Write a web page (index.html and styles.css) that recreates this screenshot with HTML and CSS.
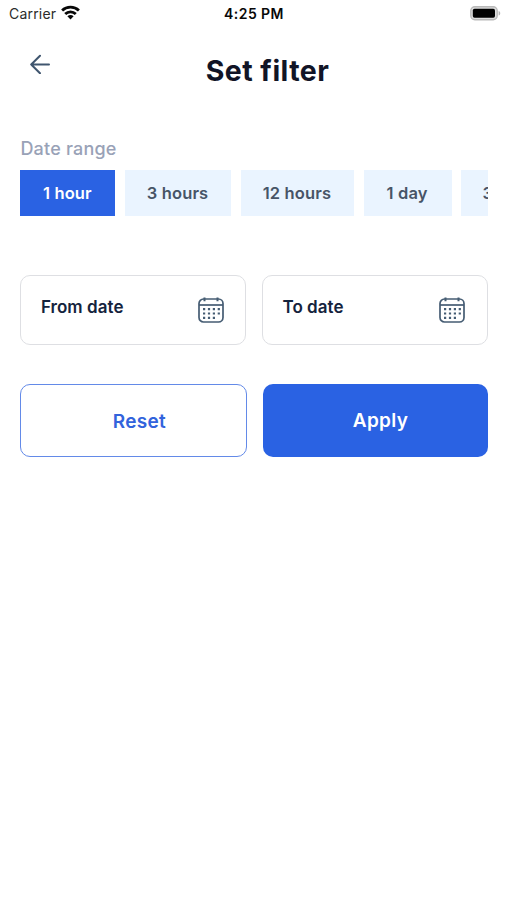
FILE: index.html
```html
<!DOCTYPE html>
<html lang="en">
<head>
<meta charset="utf-8">
<meta name="viewport" content="width=device-width, initial-scale=1">
<title>Set filter</title>
<link rel="stylesheet" href="styles.css">
</head>
<body>
<div class="status">
  <div class="carrier"><span>Carrier</span>
    <svg width="19" height="15" viewBox="0 0 19 15" fill="none" stroke="#080808" stroke-width="2.8"><path d="M1.1 5.4C5.8.9 13.2.9 17.9 5.4M4.2 9c3-2.9 7.6-2.9 10.6 0"/><path d="M9.5 14.4 6.4 11.3c1.7-1.6 4.5-1.6 6.2 0Z" fill="#080808" stroke="none"/></svg>
  </div>
  <div class="time">4:25 PM</div>
  <svg class="battery" width="31" height="15" viewBox="0 0 31 15"><rect x=".8" y=".8" width="26.4" height="13" rx="4" fill="#ddd" stroke="#b9b9b9" stroke-width="1.4"/><rect x="2.8" y="2.8" width="22.2" height="9" rx="1.7" fill="#000"/><path d="M28.6 5c2.2.6 2.2 4 0 4.6Z" fill="#b5b5b5"/></svg>
</div>
<header class="header">
  <button class="back" aria-label="Back"><svg width="20" height="20" viewBox="0 0 20 20" fill="none" stroke="#40566f" stroke-width="2" stroke-linecap="round" stroke-linejoin="round"><path d="M19 10.5H1.2M10 1.7 1.2 10.5l8.8 8.8"/></svg></button>
  <h1>Set filter</h1>
</header>
<main>
  <div class="label"><span>Date range</span></div>
  <div class="chips">
    <button class="chip c1 active"><span>1 hour</span></button>
    <button class="chip c2"><span>3 hours</span></button>
    <button class="chip c3"><span>12 hours</span></button>
    <button class="chip c4"><span>1 day</span></button>
    <button class="chip c5"><span>3 days</span></button>
  </div>
  <div class="dates">
    <div class="field"><span>From date</span>
      <svg width="26" height="26" viewBox="0 0 26 26" fill="none" stroke="#455c73" stroke-width="1.7"><rect x="1" y="2" width="24" height="23" rx="4.5"/><path d="M1 8h24"/><path d="M6.5.5v3.8M19.5.5v3.8" stroke-width="2"/><path d="M5 12.2h17M5 16.5h17M5 20.8h12" stroke-width="2.2" stroke-dasharray="2.2 2.7"/></svg>
    </div>
    <div class="field"><span>To date</span>
      <svg width="26" height="26" viewBox="0 0 26 26" fill="none" stroke="#455c73" stroke-width="1.7"><rect x="1" y="2" width="24" height="23" rx="4.5"/><path d="M1 8h24"/><path d="M6.5.5v3.8M19.5.5v3.8" stroke-width="2"/><path d="M5 12.2h17M5 16.5h17M5 20.8h12" stroke-width="2.2" stroke-dasharray="2.2 2.7"/></svg>
    </div>
  </div>
  <div class="actions">
    <button class="reset"><span>Reset</span></button>
    <button class="apply"><span>Apply</span></button>
  </div>
</main>
</body>
</html>
```
FILE: styles.css
```css
* { box-sizing: border-box; }
body { margin: 0; min-height: 900px; background: #fff; font-family: Inter, "Liberation Sans", sans-serif; overflow-x: hidden; }
button { margin: 0; padding: 0; border: 0; background: none; font-family: inherit; }
svg { display: block; flex: none; }
.status { display: grid; grid-template-columns: 1fr auto 1fr; align-items: start; height: 28px; padding: 5px 6px 0 9px; color: #080808; }
.carrier { display: flex; gap: 5px; font-size: 14px; line-height: 18px; letter-spacing: .2px; color: #2c2c2c; }
.time { margin-left: -2px; font-size: 14px; line-height: 18px; font-weight: 600; letter-spacing: .45px; }
.battery { justify-self: end; margin-top: 1px; }
.header { display: grid; grid-template-columns: 60px 1fr 32px; align-items: start; height: 110px; padding: 26px 0 0; }
.back { width: 20px; height: 20px; margin-left: 30px; }
.header h1 { margin: 0; text-align: center; font-size: 28.5px; line-height: 34px; font-weight: 650; letter-spacing: .45px; color: #111426; white-space: nowrap; }
main { padding: 0 19.5px 0 20.4px; }
.label { height: 31.6px; padding-top: 1px; line-height: 20px; font-size: 18px; color: #99a2b7; letter-spacing: .2px; font-weight: 450; }
.chips { display: flex; gap: 9.4px; overflow: hidden; height: 46.4px; }
.chip { flex: none; background: #eaf4ff; color: #475467; font-size: 16.5px; line-height: 46px; font-weight: 600; letter-spacing: .15px; white-space: nowrap; }
.chip span { margin-left: -1px; }
.c1 { width: 95px; }
.c2 { width: 106.5px; }
.c3 { width: 113.5px; }
.c4 { width: 88px; }
.c5 { width: 98px; }
.active { background: #2a62e3; color: #fff; }
.dates { display: grid; grid-template-columns: 1fr 1fr; gap: 16px; margin-top: 59px; }
.field { display: flex; justify-content: space-between; height: 70.5px; padding: 21px 21.4px 0 19.5px; border: 1px solid #dedfe3; border-radius: 10px; color: #14233d; font-size: 17px; line-height: 21px; font-weight: 600; letter-spacing: .05px; }
.actions { display: grid; grid-template-columns: 227px 225px; justify-content: space-between; margin-top: 38.5px; }
.reset, .apply { height: 73.5px; border-radius: 10px; font-size: 19px; line-height: 24px; font-weight: 600; letter-spacing: .3px; }
.reset { border: 1.5px solid #638ae8; color: #3263dc; padding: 2px 0 0 11px; }
.apply { background: #2a62e3; color: #fff; padding: 0 0 0 11px; }
```
